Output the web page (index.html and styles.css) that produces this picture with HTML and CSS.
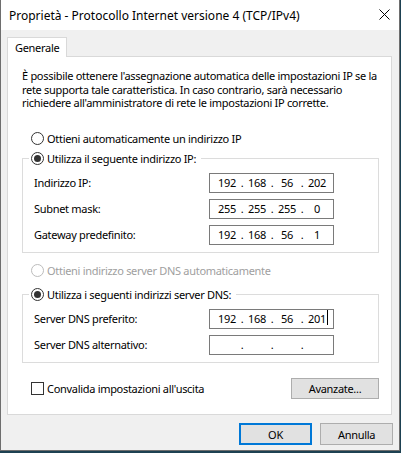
FILE: index.html
```html
<!DOCTYPE html>
<html lang="it">
<head>
<meta charset="utf-8">
<title>Proprietà - Protocollo Internet versione 4 (TCP/IPv4)</title>
<link rel="stylesheet" href="styles.css">
</head>
<body>
<div class="window">
  <div class="titlebar">
    <span class="title">Proprietà - Protocollo Internet versione 4 (TCP/IPv4)</span>
    <svg class="close" width="11" height="11" viewBox="0 0 11 11"><path d="M0.5 0.5L10.5 10.5M10.5 0.5L0.5 10.5" stroke="#000" stroke-width="1" fill="none"/></svg>
  </div>
  <div class="body">
    <div class="tabs"><div class="tab">Generale</div></div>
    <div class="panel">
      <p class="intro">È possibile ottenere l'assegnazione automatica delle impostazioni IP se la<br>rete supporta tale caratteristica. In caso contrario, sarà necessario<br>richiedere all'amministratore di rete le impostazioni IP corrette.</p>
      <div class="option opt-ip"><span class="radio"></span>Ottieni automaticamente un indirizzo IP</div>
      <fieldset class="group">
        <legend class="legend"><span class="radio checked"></span>Utilizza il seguente indirizzo IP:</legend>
        <div class="rows">
          <div class="row"><span class="lbl">Indirizzo IP:</span><div class="ip"><span class="oct">192</span><span class="dot">.</span><span class="oct">168</span><span class="dot">.</span><span class="oct">56</span><span class="dot">.</span><span class="oct">202</span></div></div>
          <div class="row"><span class="lbl">Subnet mask:</span><div class="ip"><span class="oct">255</span><span class="dot">.</span><span class="oct">255</span><span class="dot">.</span><span class="oct">255</span><span class="dot">.</span><span class="oct">0</span></div></div>
          <div class="row"><span class="lbl">Gateway predefinito:</span><div class="ip"><span class="oct">192</span><span class="dot">.</span><span class="oct">168</span><span class="dot">.</span><span class="oct">56</span><span class="dot">.</span><span class="oct">1</span></div></div>
        </div>
      </fieldset>
      <div class="option opt-dns disabled"><span class="radio"></span>Ottieni indirizzo server DNS automaticamente</div>
      <fieldset class="group group-dns">
        <legend class="legend"><span class="radio checked"></span>Utilizza i seguenti indirizzi server DNS:</legend>
        <div class="rows">
          <div class="row"><span class="lbl">Server DNS preferito:</span><div class="ip"><span class="oct">192</span><span class="dot">.</span><span class="oct">168</span><span class="dot">.</span><span class="oct">56</span><span class="dot">.</span><span class="oct caret">201</span></div></div>
          <div class="row"><span class="lbl">Server DNS alternativo:</span><div class="ip"><span class="oct"></span><span class="dot">.</span><span class="oct"></span><span class="dot">.</span><span class="oct"></span><span class="dot">.</span><span class="oct"></span></div></div>
        </div>
      </fieldset>
      <div class="footer-row">
        <div class="check-row"><span class="checkbox"></span>Convalida impostazioni all'uscita</div>
        <button class="btn btn-adv" type="button">Avanzate...</button>
      </div>
    </div>
    <div class="buttons">
      <button class="btn btn-ok" type="button">OK</button>
      <button class="btn" type="button">Annulla</button>
    </div>
  </div>
</div>
</body>
</html>
```

FILE: styles.css
```css
* { box-sizing: border-box; }
html, body { margin: 0; padding: 0; }
body {
  width: 401px;
  height: 453px;
  background: #1d4152;
  font-family: "Noto Sans", "Open Sans", sans-serif;
  font-size: 11px;
  letter-spacing: -0.3px;
  color: #000;
  overflow: hidden;
}
.window {
  width: 400px;
  height: 451px;
  background: #f0f0f0;
  border-left: 1px solid #6e6e6e;
  border-right: 1px solid #6e6e6e;
  border-bottom: 1px solid #6e6e6e;
  display: flex;
  flex-direction: column;
}
.titlebar {
  height: 30px;
  background: #fff;
  display: flex;
  align-items: center;
  padding-left: 8px;
  padding-right: 8px;
  flex: none;
}
.title {
  font-size: 12px;
  letter-spacing: 0;
  flex: 1;
  white-space: nowrap;
}
.close { flex: none; margin-right: 1px; margin-top: -2px; }
.body {
  padding: 7px 0 0 6px;
}
.tabs { display: flex; height: 19px; }
.tab {
  width: 60px;
  height: 20px;
  background: #fff;
  border: 1px solid #d9d9d9;
  border-bottom: none;
  padding-left: 7px;
  line-height: 19px;
  position: relative;
  z-index: 1;
}
.panel {
  width: 385px;
  height: 359px;
  background: #fff;
  border: 1px solid #d9d9d9;
  padding: 12px 12px 0 14px;
}
.intro {
  margin: 0;
  line-height: 13.5px;
  white-space: nowrap;
}
.option {
  display: flex;
  align-items: center;
  height: 16px;
  padding-left: 9px;
  white-space: nowrap;
}
.opt-ip { margin-top: 21px; }
.opt-dns { margin-top: 10px; }
.disabled { color: #a0a0a0; }
.radio {
  width: 13px;
  height: 13px;
  border: 1px solid #333;
  border-radius: 50%;
  margin-right: 3px;
  flex: none;
  display: inline-flex;
  align-items: center;
  justify-content: center;
  background: #fff;
}
.disabled .radio { border-color: #bcbcbc; }
.radio.checked::after {
  content: "";
  width: 7px;
  height: 7px;
  border-radius: 50%;
  background: #333;
}
.group {
  margin: 4px 0 0 0;
  width: 357px;
  border: 1px solid #dcdcdc;
  padding: 6px 0 7px 11px;
  min-width: 0;
}
.group-dns { margin-top: 8px; }
.legend {
  display: flex;
  align-items: center;
  height: 16px;
  padding: 0 5px 0 2px;
  margin-left: -5px;
  white-space: nowrap;
}
.rows { display: flex; flex-direction: column; gap: 6px; }
.row { display: flex; align-items: center; height: 20px; }
.lbl { width: 175px; flex: none; }
.ip {
  width: 125px;
  height: 20px;
  border: 1px solid #7a7a7a;
  display: flex;
  align-items: center;
  padding-left: 5px;
  background: #fff;
}
.oct { width: 24px; text-align: center; flex: none; }
.dot { width: 6px; text-align: center; flex: none; }
.caret { position: relative; }
.caret::after {
  content: "";
  position: absolute;
  right: 1px;
  top: -1px;
  width: 1px;
  height: 15px;
  background: #000;
}
.footer-row {
  margin-top: 15px;
  width: 357px;
  display: flex;
  justify-content: space-between;
  align-items: center;
}
.check-row {
  display: flex;
  align-items: center;
  padding-left: 9px;
}
.checkbox {
  width: 13px;
  height: 13px;
  border: 1px solid #333;
  background: #fff;
  margin-right: 3px;
}
.btn {
  font-family: inherit;
  font-size: 11px;
  letter-spacing: -0.3px;
  width: 73px;
  height: 22px;
  background: #e1e1e1;
  border: 1px solid #adadad;
  padding: 0;
  color: #000;
}
.btn-adv { width: 88px; height: 21px; }
.btn-ok { border: 2px solid #0078d7; }
.buttons {
  display: flex;
  justify-content: flex-end;
  gap: 8px;
  padding-right: 6px;
  margin-top: 8px;
}
```
